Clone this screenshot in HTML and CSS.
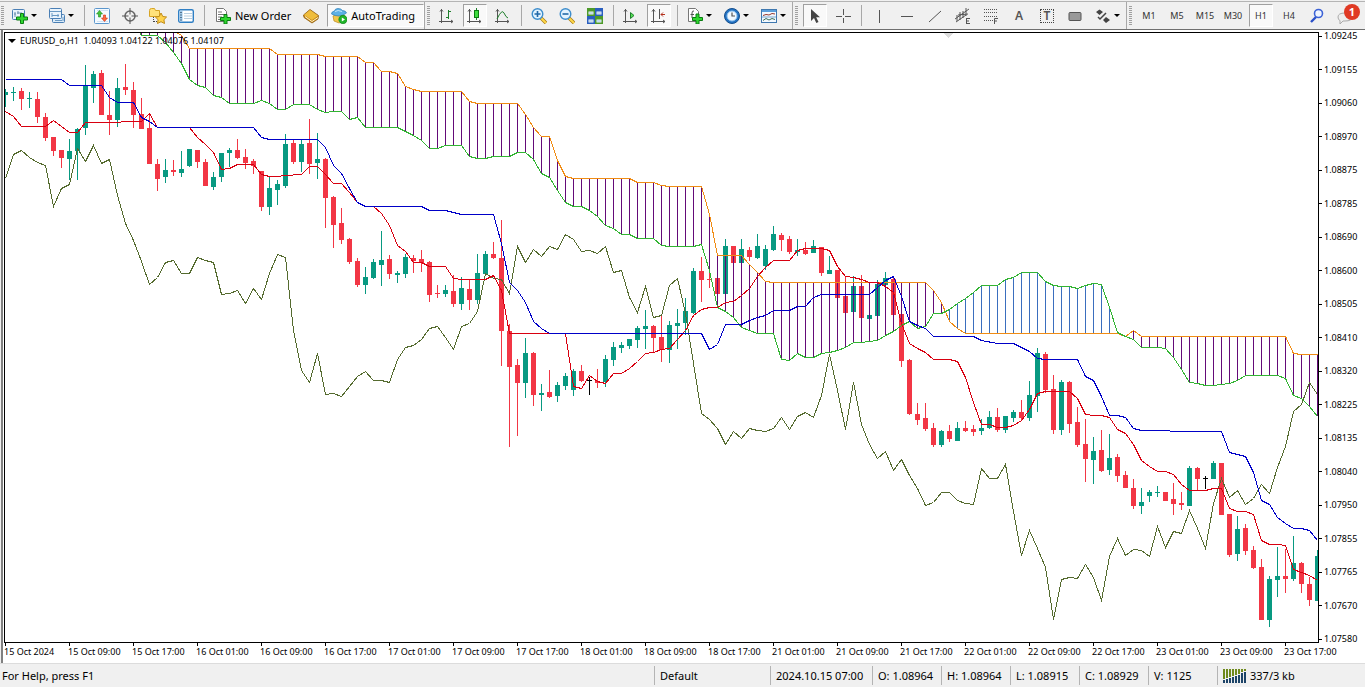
FILE: index.html
```
<!DOCTYPE html>
<html lang="en">
<head>
<meta charset="utf-8">
<title>EURUSD_o,H1</title>
<link rel="stylesheet" href="styles.css">
</head>
<body>
<header class="toolbar">
  <div class="group">
    <button class="tool drop" aria-label="New chart"><svg class="icon" viewBox="0 0 16 16"><rect x=".5" y="1.500" width="12" height="10" rx="1" fill="#eaf4fc" stroke="#4a7fb5"/><path d="M3 4v5M2 6h2M6 3v3M5 5h3M9 4v2" stroke="#6b8fae" fill="none"/><path d="M8.500 5.500h3v3.500h4v3h-4v3.500h-3v-3.500h-4v-3h4z" fill="#2fd62f" stroke="#0b7d12"/></svg><i class="caret"></i></button>
    <button class="tool drop" aria-label="Profiles"><svg class="icon" viewBox="0 0 16 16"><rect x="3.500" y="6.500" width="12" height="8" rx="1" fill="#dcecf9" stroke="#4a7fb5"/><rect x=".5" y=".5" width="12" height="10" rx="1" fill="#eaf4fc" stroke="#4a7fb5"/><path d="M1 3.500h11M3 5v4M3 7.500h7M9 6v3M14 9v4M6 12.500h7" stroke="#6b9ac4" fill="none"/></svg><i class="caret"></i></button>
    <span class="sep"></span>
    <button class="tool" aria-label="Market Watch"><svg class="icon" viewBox="0 0 16 16"><rect x=".5" y=".5" width="15" height="15" rx="1" fill="#f4faff" stroke="#5b96cc"/><path d="M3 2.500h11M3 13.500h11" stroke="#cfe2f2"/><path d="M5.500 2.500l3 3.500h-2v3h-2V6h-2z" fill="#46c53a" stroke="#1c8a1c" stroke-width=".6"/><path d="M10.500 13.500l3-3.500h-2V7h-2v3h-2z" fill="#ff6a3c" stroke="#cc2c10" stroke-width=".6"/></svg></button>
    <button class="tool" aria-label="Data Window"><svg class="icon" viewBox="0 0 16 16"><circle cx="8" cy="8" r="5" fill="none" stroke="#666" stroke-width="1.500"/><path d="M8 0v6.500M8 9.500V16M0 8h6.500M9.500 8H16" stroke="#555"/></svg></button>
    <button class="tool" aria-label="Navigator"><svg class="icon wide" viewBox="0 0 18 16"><path d="M.5 2.500q0-2 2-2h3l1 2h4v6H.5z" fill="#ffe27a" stroke="#d7a425"/><path d="M4.500 9v5M5 13.500h3" stroke="#444" stroke-dasharray="1 1"/><path d="M12 5l1.800 3.500 3.800.5-2.700 2.700.6 3.800L12 13.700l-3.500 1.800.6-3.800L6.400 9l3.800-.5z" fill="#ffd34d" stroke="#bf8a16"/></svg></button>
    <button class="tool" aria-label="Terminal"><svg class="icon" viewBox="0 0 16 16"><rect x=".7" y="1.700" width="14.600" height="12.600" rx="1.500" fill="#fff" stroke="#2f7fc4" stroke-width="1.400"/><path d="M1.500 3h3v10.500h-3z" fill="#9cc7ea"/><path d="M3 4v9" stroke="#123" stroke-dasharray="1 1.500"/><path d="M6 5.500h8M6 8h8M6 10.500h8" stroke="#b9cfe0"/></svg></button>
    <span class="sep"></span>
    <button class="tool labelled order"><svg class="icon" viewBox="0 0 16 16"><path d="M1.500.5h7l3 3v10h-10z" fill="#fff" stroke="#777"/><path d="M3 4h4M3 6.500h6M3 9h4M3 11.500h3" stroke="#777"/><path d="M9 6.500h3v3h3.500v3H12V16H9v-3.500H5.500v-3H9z" fill="#2fd62f" stroke="#0b7d12"/></svg><span>New Order</span></button>
    <button class="tool" aria-label="MetaEditor"><svg class="icon" viewBox="0 0 16 16"><path d="M.5 7L7 1.500l8.500 6L15 11l-6 4L1 9.500z" fill="#c98a18" stroke="#8d5b0d" stroke-width=".8"/><path d="M1 7l6-5 8 5.700L9 12z" fill="#efbd3c"/><path d="M2 8.500l7 5 6-4" stroke="#fff2c4" fill="none"/></svg></button>
    <button class="tool labelled auto pressed"><svg class="icon" viewBox="0 0 16 16"><path d="M2 8l6-3 6 3-1 5-5 2-5-2z" fill="#f2c64a" stroke="#b98a1d" stroke-width=".7"/><path d="M.5 6q0-2.500 3-3Q4 .5 7 .5t4.500 2q3.500.3 4 2.500Q12 8 8 8T.5 6z" fill="#5db1e6" stroke="#2a7cb8" stroke-width=".7"/><path d="M4 3.500q3-2 7 0" stroke="#c7e8fb" fill="none"/><circle cx="12" cy="11.500" r="4.200" fill="#1fb32a" stroke="#0b7d12" stroke-width=".6"/><path d="M10.800 9.500v4l3.200-2z" fill="#fff"/></svg><span>AutoTrading</span></button>
  </div>
  <div class="group">
    <button class="tool" aria-label="Bar chart"><svg class="icon line" viewBox="0 0 16 16"><path d="M2.500 1v14M0 13.500h14M1 3.500l1.500-2 1.500 2M12 12l2 1.500-2 1.500"/><path d="M9.500 2v9M9.500 3.500H12M7 9.500h2.500" class="green"/></svg></button>
    <button class="tool pressed" aria-label="Candlesticks"><svg class="icon line" viewBox="0 0 16 16"><path d="M2.500 1v14M0 13.500h14M1 3.500l1.500-2 1.500 2M12 12l2 1.500-2 1.500"/><path d="M9.500 0v12" class="green"/><rect x="7.500" y="2.500" width="4" height="7" fill="#3edc3e" stroke="#0b7d12"/></svg></button>
    <button class="tool" aria-label="Line chart"><svg class="icon line" viewBox="0 0 16 16"><path d="M2.500 1v14M0 13.500h14M1 3.500l1.500-2 1.500 2M12 12l2 1.500-2 1.500"/><path d="M2 11Q7 .5 9 5t4 5" class="green"/></svg></button>
    <span class="sep"></span>
    <button class="tool" aria-label="Zoom in"><svg class="icon" viewBox="0 0 16 16"><path d="M10 10l5 5" stroke="#a77b18" stroke-width="3.400"/><path d="M10 10l5 5" stroke="#ffd84a" stroke-width="2"/><circle cx="6.500" cy="6" r="5.300" fill="#e2f3ff" stroke="#3d8dcc" stroke-width="1.400"/><path d="M6.500 3v6M3.500 6h6" stroke="#2269a8" stroke-width="1.600"/></svg></button>
    <button class="tool" aria-label="Zoom out"><svg class="icon" viewBox="0 0 16 16"><path d="M10 10l5 5" stroke="#a77b18" stroke-width="3.400"/><path d="M10 10l5 5" stroke="#ffd84a" stroke-width="2"/><circle cx="6.500" cy="6" r="5.300" fill="#e2f3ff" stroke="#3d8dcc" stroke-width="1.400"/><path d="M3.500 6h6" stroke="#2269a8" stroke-width="1.600"/></svg></button>
    <button class="tool" aria-label="Tile windows"><svg class="icon" viewBox="0 0 16 16"><path d="M0 0h8v8H0zM8 8h8v8H8z" fill="#4d9a2a"/><path d="M8 0h8v8H8zM0 8h8v8H0z" fill="#2a5fc0"/><path d="M1.500 3.500h5v3h-5zM9.500 3.500h5v3h-5zM1.500 11.500h5v3h-5zM9.500 11.500h5v3h-5z" fill="#eef6fb"/><path d="M2 5h4M10 5h4M2 13h4M10 13h4" stroke="#9ec2dc"/></svg></button>
    <span class="sep"></span>
    <button class="tool" aria-label="Auto scroll"><svg class="icon line" viewBox="0 0 16 16"><path d="M2.500 1v14M0 13.500h14M1 3.500l1.500-2 1.500 2M12 12l2 1.500-2 1.500"/><path d="M7.500 4.500v6l3.500-3z" fill="#55e055" class="green"/></svg></button>
    <button class="tool pressed" aria-label="Chart shift"><svg class="icon line" viewBox="0 0 16 16"><path d="M2.500 1v14M0 13.500h14M1 3.500l1.500-2 1.500 2M12 12l2 1.500-2 1.500M8.500 1v10"/><path d="M14 6.500H10M12 4.500l-2 2 2 2" stroke="#b3301c"/></svg></button>
    <span class="sep"></span>
    <button class="tool drop" aria-label="Indicators"><svg class="icon" viewBox="0 0 16 16"><path d="M1.500.5h7l3 3v10h-10z" fill="#fff" stroke="#777"/><path d="M7 3q-2-.5-2 2v5M3.500 6.500H7" stroke="#555" fill="none"/><path d="M9 6h3v3.500h3.500v3H12V16H9v-3.500H5.500v-3H9z" fill="#2fd62f" stroke="#0b7d12"/></svg><i class="caret"></i></button>
    <button class="tool drop" aria-label="Periods"><svg class="icon" viewBox="0 0 16 16"><circle cx="8" cy="8" r="7.500" fill="#2272c3" stroke="#154f8e"/><circle cx="8" cy="8" r="5" fill="#f0f8ff" stroke="#8dc1ee"/><path d="M8 4.500V8h3" stroke="#555" fill="none" stroke-width="1.200"/></svg><i class="caret"></i></button>
    <button class="tool drop" aria-label="Templates"><svg class="icon" viewBox="0 0 16 16"><rect x=".5" y="1.500" width="15" height="13" fill="#f3f9ff" stroke="#3f78af"/><path d="M1 3h14" stroke="#5b9fdc" stroke-width="2"/><path d="M2 7.500l3-1 3 .5 3-1.500 3 .5" stroke="#96382c" fill="none"/><path d="M2 12.500l3-2 3 1.500 3-1.500 3 1" stroke="#3d6f58" fill="none"/><path d="M1 9h14" stroke="#7aa7cf"/></svg><i class="caret"></i></button>
  </div>
  <div class="group">
    <button class="tool pressed" aria-label="Cursor"><svg class="icon" viewBox="0 0 16 16"><path d="M4 1v12l3-3 2.300 5 2.200-1-2.300-4.700H13z" fill="#444"/></svg></button>
    <button class="tool" aria-label="Crosshair"><svg class="icon line" viewBox="0 0 16 16"><path d="M8.500 1v6M8.500 10v5M1 8.500h6M10 8.500h6"/></svg></button>
    <span class="sep"></span>
    <button class="tool" aria-label="Vertical line"><svg class="icon line" viewBox="0 0 16 16"><path d="M8.500 2v13"/></svg></button>
    <button class="tool" aria-label="Horizontal line"><svg class="icon line" viewBox="0 0 16 16"><path d="M2 8.500h12"/></svg></button>
    <button class="tool" aria-label="Trendline"><svg class="icon line" viewBox="0 0 16 16"><path d="M2 14L14 3"/></svg></button>
    <button class="tool" aria-label="Equidistant channel"><svg class="icon line" viewBox="0 0 16 16"><path d="M0 11L14 1M1 14L11 7M2 7v6M5 4v8M8 3v7M11 0v8M3 7l10-1M11 10.500h4M11 13h3M11 15.500h4M11.500 10v6"/></svg></button>
    <button class="tool" aria-label="Fibonacci retracement"><svg class="icon line" viewBox="0 0 16 16"><path d="M1 1.500h14M1 4.500h14M1 8.500h14M1 12.500h9" stroke-dasharray="1 1"/><path d="M11.500 16v-5.500H15M11 13h3"/></svg></button>
    <button class="tool letter" aria-label="Text">A</button>
    <button class="tool letter" aria-label="Text label"><span class="dotted">T</span></button>
    <button class="tool" aria-label="Rectangle"><svg class="icon" viewBox="0 0 16 16"><rect x="2" y="4.500" width="12" height="8" rx="1" fill="#999" stroke="#555"/></svg></button>
    <button class="tool drop" aria-label="Arrows"><svg class="icon" viewBox="0 0 16 16"><path d="M1 4l3.500-2.500L8 4 4.500 7zM8 12l3-3 4 3-4 3z" fill="#444"/><path d="M3 9l2 2 6-6" stroke="#444" fill="none" stroke-width="1.500"/></svg><i class="caret"></i></button>
  </div>
  <div class="group last">
    <button class="tool">M1</button>
    <button class="tool">M5</button>
    <button class="tool">M15</button>
    <button class="tool">M30</button>
    <button class="tool pressed">H1</button>
    <button class="tool">H4</button>
  </div>
  <div class="extras">
    <button class="tool" aria-label="Search"><svg class="icon" viewBox="0 0 16 16"><path d="M7 9L2 14" stroke="#2a50c8" stroke-width="2.400"/><circle cx="9.500" cy="5.500" r="4" fill="#eef4ff" stroke="#3b62d6" stroke-width="1.600"/></svg></button>
    <button class="tool notice" aria-label="Notifications"><svg class="icon bubble" viewBox="0 0 18 16"><path d="M2 7q0-4 7-4t7 4-7 4H7l-3 3v-3.500Q2 10 2 7z" fill="#eee" stroke="#aaa"/></svg><span class="badge">1</span></button>
  </div>
</header>

<main class="chart">
  <div class="plot">
    <svg id="plot" class="canvas" viewBox="5 33 1313 609" preserveAspectRatio="none" role="img" aria-label="EURUSD hourly candlesticks with Ichimoku cloud"></svg>
    <p class="caption"><i class="caret big"></i>EURUSD_o,H1&nbsp; 1.04093 1.04122 1.04076 1.04107</p>
  </div>
  <ul class="prices">
    <li>1.09245</li><li>1.09155</li><li>1.09060</li><li>1.08970</li><li>1.08875</li><li>1.08785</li><li>1.08690</li><li>1.08600</li><li>1.08505</li><li>1.08410</li><li>1.08320</li><li>1.08225</li><li>1.08135</li><li>1.08040</li><li>1.07950</li><li>1.07855</li><li>1.07765</li><li>1.07670</li><li>1.07580</li>
  </ul>
  <ul class="times">
    <li>15 Oct 2024</li><li>15 Oct 09:00</li><li>15 Oct 17:00</li><li>16 Oct 01:00</li><li>16 Oct 09:00</li><li>16 Oct 17:00</li><li>17 Oct 01:00</li><li>17 Oct 09:00</li><li>17 Oct 17:00</li><li>18 Oct 01:00</li><li>18 Oct 09:00</li><li>18 Oct 17:00</li><li>21 Oct 01:00</li><li>21 Oct 09:00</li><li>21 Oct 17:00</li><li>22 Oct 01:00</li><li>22 Oct 09:00</li><li>22 Oct 17:00</li><li>23 Oct 01:00</li><li>23 Oct 09:00</li><li>23 Oct 17:00</li>
  </ul>
</main>

<footer class="status">
  <span class="help">For Help, press F1</span>
  <span class="cell profile">Default</span>
  <span class="cell date">2024.10.15 07:00</span>
  <span class="cell">O: 1.08964</span>
  <span class="cell">H: 1.08964</span>
  <span class="cell">L: 1.08915</span>
  <span class="cell">C: 1.08929</span>
  <span class="cell">V: 1125</span>
  <span class="cell traffic"><svg class="bars" viewBox="0 0 24 14"><path d="M1 0v10M4 0v9M7 0v8M10 0v7M13 0v6M16 0v5M19 0v3M22 0v2" stroke="#6f8a1c" stroke-width="2"/><path d="M1 11v3M4 10v4M7 9v5M10 8v6M13 7v7M16 6v8M19 4v10M22 3v11" stroke="#1d4468" stroke-width="2"/></svg>337/3 kb</span>
</footer>
<script src="chart.js"></script>
</body>
</html>
```
FILE: styles.css
```
* { box-sizing: border-box; }

body {
  margin: 0;
  height: 100vh;
  display: flex;
  flex-direction: column;
  overflow: hidden;
  background: #fff;
  color: #000;
  font: 11px/16px "Noto Sans", "Open Sans", sans-serif;
}

ul { list-style: none; margin: 0; padding: 0; }

/* Toolbar */
.toolbar {
  flex: none;
  display: flex;
  height: 30px;
  padding-top: 2px;
  background: linear-gradient(#f0f0f0 1px, #b4b4b4 1px, #b4b4b4 2px, #f0f0f0 2px);
  border-bottom: 1px solid #6f6f6f;
}

.group {
  display: flex;
  flex: none;
  align-items: center;
  border-right: 1px solid #a8a8a8;
}

.group::before {
  content: "";
  width: 3px;
  height: 20px;
  margin: 0 3px 0 2px;
  background: repeating-linear-gradient(#a0a0a0 0 1px, #f0f0f0 1px 2px);
}

.group:first-child::before { margin: 0 2px 0 1px; }
.group.last { border-right: 0; }

.extras { display: flex; align-items: center; }

.tool {
  display: flex;
  flex: none;
  align-items: center;
  justify-content: center;
  width: 24px;
  height: 23px;
  margin: 0 2px;
  padding: 0;
  border: 1px solid transparent;
  background: none;
  color: #333;
  font: 9px/16px "Noto Sans", sans-serif;
}

.tool.drop { width: 33px; gap: 3px; justify-content: flex-start; padding-left: 3px; }
.tool.pressed { background: #f9f9f9; border-color: #a0a0a0 #fff #fff #a0a0a0; }
.tool.labelled { width: auto; gap: 4px; color: #000; font-size: 11px; }
.tool.order { padding: 0 3px 0 4px; }
.tool.auto { gap: 4px; padding: 0 8px 0 3px; margin-right: 0; }
.tool.letter { font-size: 12px; font-weight: 600; color: #555; }

.dotted { width: 14px; height: 14px; line-height: 12px; border: 1px dotted #444; }

.icon { display: block; flex: none; width: 16px; height: 16px; fill: none; }
.icon.wide { width: 18px; }
.icon.line { stroke: #555; }
.icon .green { stroke: #1f7f2c; }

.sep { flex: none; width: 1px; height: 21px; margin: 0 3px 0 4px; background: #a8a8a8; }

.caret {
  flex: none;
  width: 0;
  height: 0;
  border: 3px solid transparent;
  border-top-color: #000;
  border-bottom: 0;
}

.notice { position: relative; }
.icon.bubble { width: 18px; margin-top: 4px; }

.badge {
  position: absolute;
  top: -1px;
  right: -4px;
  width: 16px;
  height: 16px;
  border-radius: 50%;
  background: #e03a24;
  color: #fff;
  font: bold 11px/16px "Noto Sans", sans-serif;
}

/* Chart window */
.chart {
  flex: 1;
  min-height: 0;
  display: grid;
  grid-template: minmax(0, 1fr) 20px / minmax(0, 1fr) 46px;
  padding: 2px 0 0 4px;
  background: linear-gradient(90deg, #f0f0f0 1px, #808080 1px, #808080 3px, #fff 3px);
  border-bottom: 1px solid #dcdcdc;
  font-size: 9px;
  line-height: 12px;
}

.plot { position: relative; border: 1px solid #000; }

.canvas { display: block; width: 100%; height: 100%; shape-rendering: crispEdges; }

.caption {
  position: absolute;
  top: 2px;
  left: 3px;
  display: flex;
  align-items: center;
  gap: 4px;
  margin: 0;
  white-space: nowrap;
}

.caret.big { border-width: 4px 4px 0; }

.prices {
  display: flex;
  flex-direction: column;
  justify-content: space-between;
  margin: -2px 0 -2px;
}

.prices li { display: flex; align-items: center; gap: 2px; }
.prices li::before { content: ""; width: 3px; height: 1px; background: #000; }

.times { display: flex; }

.times li { position: relative; flex: 64 0 0; min-width: 0; white-space: nowrap; padding-top: 3px; }
.times li:last-child { flex-grow: 35; }
.times li::before { content: ""; position: absolute; top: 0; left: 1px; width: 1px; height: 3px; background: #000; }

/* Status bar */
.status {
  flex: none;
  display: flex;
  align-items: center;
  height: 23px;
  background: #f0f0f0;
  white-space: nowrap;
}

.help { flex: 1; padding-left: 2px; }

.cell {
  display: flex;
  align-items: center;
  gap: 3px;
  width: 69px;
  height: 19px;
  padding-left: 5px;
  border-left: 1px solid #b4b4b4;
}

.cell.profile { width: 116px; }
.cell.date { width: 102px; }
.cell.traffic { width: 148px; }
.bars { width: 24px; height: 14px; }
```
FILE: chart.js
```
const STEP = 8;
const FIRST = 5;
const xAt = i => FIRST + STEP * i;

// One bar per entry: high, body top, body bottom, low, colour key.
const bars = `89 92 95 107 g|87 92 93 101 g|88 91 99 110 r|92 98 99 108 g|92 99 117 123 r|113 117 138 141 r|137 137 151 156 r|150 150 158 168 r|139 151 159 180 g|128 129 151 180 g
65 85 128 135 g|71 74 88 103 g|70 73 115 115 r|91 115 120 135 r|78 88 120 127 g|64 87 90 95 r|82 90 115 128 r|98 114 129 129 r|114 128 164 164 r|159 164 179 191 r
159 170 177 183 g|160 170 172 176 r|151 169 173 177 g|149 149 166 167 g|150 150 162 168 r|159 162 186 186 r|172 177 187 190 g|153 153 177 182 g|148 150 153 167 g|139 150 158 159 r
149 157 163 169 r|159 161 166 174 r|171 171 207 211 r|177 188 207 215 g|180 184 190 205 g|134 144 186 188 g|140 143 162 164 r|139 144 162 172 g|119 143 164 174 r|133 159 163 179 g
158 159 198 228 r|196 197 225 248 r|208 223 240 244 r|238 239 262 264 r|258 261 285 287 r|267 277 285 294 g|259 262 278 279 g|231 260 265 286 g|255 259 274 279 r|271 273 275 283 g
254 257 274 278 g|255 258 261 273 r|250 259 263 272 r|261 262 295 302 r|285 293 294 298 r|285 290 294 297 g|275 291 304 307 r|277 288 304 310 g|280 289 300 310 r|254 273 300 304 g
251 254 274 275 g|242 254 258 259 r|220 258 331 366 r|324 331 367 447 r|359 365 383 436 r|338 353 383 398 g|352 353 395 406 r|384 393 395 411 g|370 392 397 398 r|382 385 396 402 g
373 376 386 390 g|369 371 390 396 g|365 371 381 382 r|377 380 381 395 k|369 381 383 388 r|355 359 382 387 g|342 347 360 366 g|342 345 348 353 g|339 339 346 349 g|326 328 340 348 g
310 326 329 349 g|325 326 338 352 r|315 337 350 362 r|321 325 350 363 g|309 323 326 349 g|298 311 323 335 g|268 271 313 314 g|257 271 280 302 r|269 279 280 288 r|278 278 294 303 r
239 246 294 294 g|246 246 263 263 r|239 249 263 263 g|247 250 257 261 r|234 246 258 259 g|245 249 266 270 g|226 234 250 251 g|233 235 240 251 r|236 239 252 254 r|239 250 252 256 g
242 250 254 255 r|240 246 253 253 g|247 247 273 276 r|256 270 274 274 g|270 270 298 298 r|276 296 313 317 r|276 286 312 314 g|275 286 318 319 r|314 315 319 319 g|280 284 316 317 g
272 278 285 286 g|276 279 315 315 r|314 314 361 367 r|359 360 414 415 r|403 414 420 425 r|403 418 429 431 r|423 428 445 447 r|430 431 445 447 g|425 431 439 442 r|422 428 441 441 g
421 428 431 432 r|425 429 432 436 r|419 428 431 435 g|411 417 428 429 g|408 417 430 432 r|416 416 430 433 g|410 412 418 422 g|400 412 418 421 r|381 395 418 421 g|348 353 396 412 g
352 354 390 393 r|375 389 430 434 r|380 382 430 435 g|381 382 424 433 r|407 422 445 447 r|419 444 459 482 r|437 451 460 484 g|430 450 471 472 r|434 458 470 475 g|454 457 476 482 r
471 475 488 488 r|479 488 506 509 r|488 502 506 514 g|490 492 496 502 g|486 492 493 497 g|492 492 501 501 r|483 499 504 515 r|492 503 505 510 r|466 468 506 506 g|467 468 479 491 r
476 478 479 489 k|461 463 479 479 g|463 463 515 515 r|514 514 555 557 r|516 529 554 561 g|524 528 551 555 r|546 550 568 569 r|559 567 620 620 r|576 579 620 627 g|547 576 580 597 g
549 576 579 593 r|536 563 579 581 g|562 563 584 593 r|577 584 600 606 r|550 556 601 601 g`
  .split(/[|\n]/)
  .map(row => row.trim().split(' '));

// Indicator lines as "x,y" vertices.
const lines = {
  spanA: '133,20 139,32 141,35 157,35 165,42 173,52 181,63 189,79 197,85 205,87 213,95 221,97 229,103 253,103 261,100 269,103 277,109 285,109 293,104 309,104 317,109 325,112 333,111 341,111 349,119 357,117 365,127 397,127 405,131 413,135 421,140 429,148 437,148 445,145 461,145 469,156 477,158 485,158 493,156 509,156 517,152 525,152 533,159 541,173 549,177 557,190 565,202 573,206 581,206 589,210 597,216 605,225 613,228 621,234 629,234 637,238 653,238 661,245 669,246 693,246 701,244 709,270 717,307 725,311 733,317 741,327 749,330 757,333 773,333 781,359 789,360 797,353 805,357 813,357 821,353 829,352 837,350 845,347 853,342 861,342 869,341 877,340 885,335 893,331 901,325 909,321 917,328 925,326 933,313 941,313 949,309 957,303 965,298 973,292 981,285 997,285 1005,279 1013,277 1021,272 1037,272 1045,281 1053,285 1061,286 1069,286 1077,288 1085,285 1093,283 1101,284 1109,307 1117,332 1125,336 1133,339 1141,347 1157,347 1165,348 1173,357 1181,369 1189,382 1197,383 1205,385 1213,385 1221,384 1229,383 1237,380 1245,375 1277,375 1285,378 1293,395 1301,398 1309,406 1317,416',
  spanB: '133,20 173,30 181,35 189,48 269,48 277,54 317,54 325,56 357,56 365,62 373,62 381,71 389,71 397,73 405,86 413,89 421,91 461,91 469,101 477,103 517,103 525,114 533,127 541,136 549,136 557,160 565,176 573,178 629,178 637,182 653,182 661,185 669,186 701,186 709,214 717,255 741,255 749,264 757,272 765,281 773,282 925,282 933,290 941,302 949,321 957,328 965,333 1117,333 1125,336 1133,330 1141,336 1285,336 1293,353 1301,354 1317,354',
  chikou: '5,178 13,154 21,150 29,157 37,162 45,165 53,206 61,188 69,184 77,148 85,161 93,145 101,163 109,159 117,195 125,223 133,240 141,261 149,284 157,277 165,262 173,260 181,273 189,273 197,257 205,260 213,262 221,294 229,293 237,290 245,303 253,288 261,299 269,273 277,254 285,257 293,330 301,370 309,382 317,353 325,394 333,393 341,396 349,386 357,376 365,371 373,380 381,380 389,382 397,359 405,347 413,345 421,339 429,328 437,326 445,337 453,349 461,326 469,323 477,311 485,273 493,278 501,279 509,293 517,246 525,262 533,249 541,256 549,246 557,249 565,234 573,239 581,251 589,250 597,253 605,246 613,272 621,270 629,297 637,312 645,286 653,317 661,315 669,285 677,278 685,313 693,363 701,413 709,419 717,428 725,444 733,431 741,438 749,428 757,430 765,431 773,428 781,417 789,429 797,416 805,412 813,417 821,395 829,354 837,390 845,429 853,382 861,424 869,444 877,458 885,451 893,470 901,459 909,475 917,488 925,505 933,502 941,492 949,492 957,500 965,503 973,504 981,468 989,478 997,478 1005,464 1013,511 1021,555 1029,530 1037,548 1045,567 1053,619 1061,579 1069,577 1077,578 1085,564 1093,577 1101,600 1109,556 1117,538 1125,555 1133,549 1141,550 1149,556 1157,526 1165,547 1173,531 1181,533 1189,510 1197,528 1205,548 1213,503 1221,478 1229,497 1237,490 1245,504 1253,498 1261,484 1269,493 1277,467 1285,446 1293,411 1301,404 1309,382 1317,394',
  tenkan: '5,111 13,116 21,126 45,126 53,120 61,126 69,132 77,132 85,122 117,122 125,121 141,121 149,113 157,127 189,127 197,137 205,144 213,152 221,169 229,168 237,164 253,164 261,174 269,176 277,176 285,175 301,174 309,166 317,166 325,174 333,183 341,183 349,192 357,202 365,206 373,206 381,213 389,225 397,245 405,251 413,262 421,262 429,266 445,266 453,278 461,279 485,279 493,275 501,290 509,333 565,333 573,386 581,388 589,375 597,381 605,383 613,373 621,373 629,368 637,361 645,353 653,352 661,349 669,348 677,339 685,330 693,315 701,309 709,307 717,307 725,302 733,301 741,295 749,288 757,276 765,267 773,260 789,260 797,250 805,248 821,248 829,250 837,266 845,276 853,277 861,279 869,282 877,282 885,286 893,292 901,323 909,343 917,348 925,352 933,359 949,359 957,361 965,377 973,402 981,424 989,424 997,427 1005,427 1013,425 1021,420 1029,409 1037,393 1045,391 1069,391 1077,398 1085,414 1093,415 1101,415 1109,417 1117,429 1125,433 1133,444 1141,460 1149,466 1157,471 1165,471 1173,474 1181,484 1189,490 1205,490 1213,488 1221,488 1229,508 1237,511 1245,511 1253,514 1261,540 1269,544 1277,544 1285,545 1293,569 1301,572 1309,575 1317,580',
  kijun: '5,79 61,79 69,85 101,85 109,97 117,102 133,102 141,117 149,121 157,127 253,127 261,137 269,139 317,139 325,147 333,165 341,173 349,188 357,202 365,206 421,206 429,210 445,210 461,214 493,214 501,243 509,282 517,290 525,302 533,321 541,328 549,333 701,333 709,349 717,344 725,324 741,324 749,320 757,317 765,315 773,310 789,310 797,306 805,306 813,297 821,294 869,294 877,287 885,280 893,276 901,296 909,321 917,325 925,328 933,336 973,336 981,340 997,343 1013,343 1021,347 1029,351 1037,358 1045,359 1077,359 1085,376 1093,380 1101,396 1109,415 1117,415 1125,417 1133,428 1141,430 1165,430 1173,431 1221,431 1229,452 1245,456 1253,472 1261,500 1269,504 1277,517 1285,523 1293,528 1301,528 1309,530 1317,540'
};

const colours = {
  g: '#089981', r: '#f23645', k: '#000',
  spanA: '#32b432', spanB: '#f08c14', chikou: '#556b2f',
  tenkan: '#d80010', kijun: '#0000c8',
  falling: '#640a78', rising: '#3a6ebe'
};

function valueAt(points, x) {
  for (let i = 1; i < points.length; i++) {
    const [x0, y0] = points[i - 1];
    const [x1, y1] = points[i];
    if (x >= x0 && x <= x1) return Math.round(y0 + (y1 - y0) * (x - x0) / (x1 - x0));
  }
  return 0;
}

const rect = (x, y, w, h, fill) =>
  `<rect x="${x}" y="${y}" width="${w}" height="${h}" fill="${fill}"/>`;
const polyline = name =>
  `<polyline points="${lines[name]}" transform="translate(.5 .5)" fill="none" stroke="${colours[name]}"/>`;

const toPoints = name => lines[name].split(' ').map(p => p.split(',').map(Number));
const spanA = toPoints('spanA');
const spanB = toPoints('spanB');

let candles = '';
let cloud = '';
bars.forEach(([high, top, bottom, low, key], i) => {
  const x = xAt(i);
  candles += rect(x, high, 1, low - high, colours[key]);
  candles += rect(x - 2, top, 5, Math.max(1, bottom - top), colours[key]);
  if (x < 141) return;
  const a = valueAt(spanA, x);
  const b = valueAt(spanB, x);
  cloud += rect(x, Math.min(a, b), 1, Math.abs(a - b), a > b ? colours.falling : colours.rising);
});

document.getElementById('plot').innerHTML =
  candles + cloud +
  ['spanB', 'spanA', 'chikou', 'tenkan', 'kijun'].map(polyline).join('') +
  '<path d="M944 33h9l-4.500 5z" fill="#dcdcdc"/>';
```
